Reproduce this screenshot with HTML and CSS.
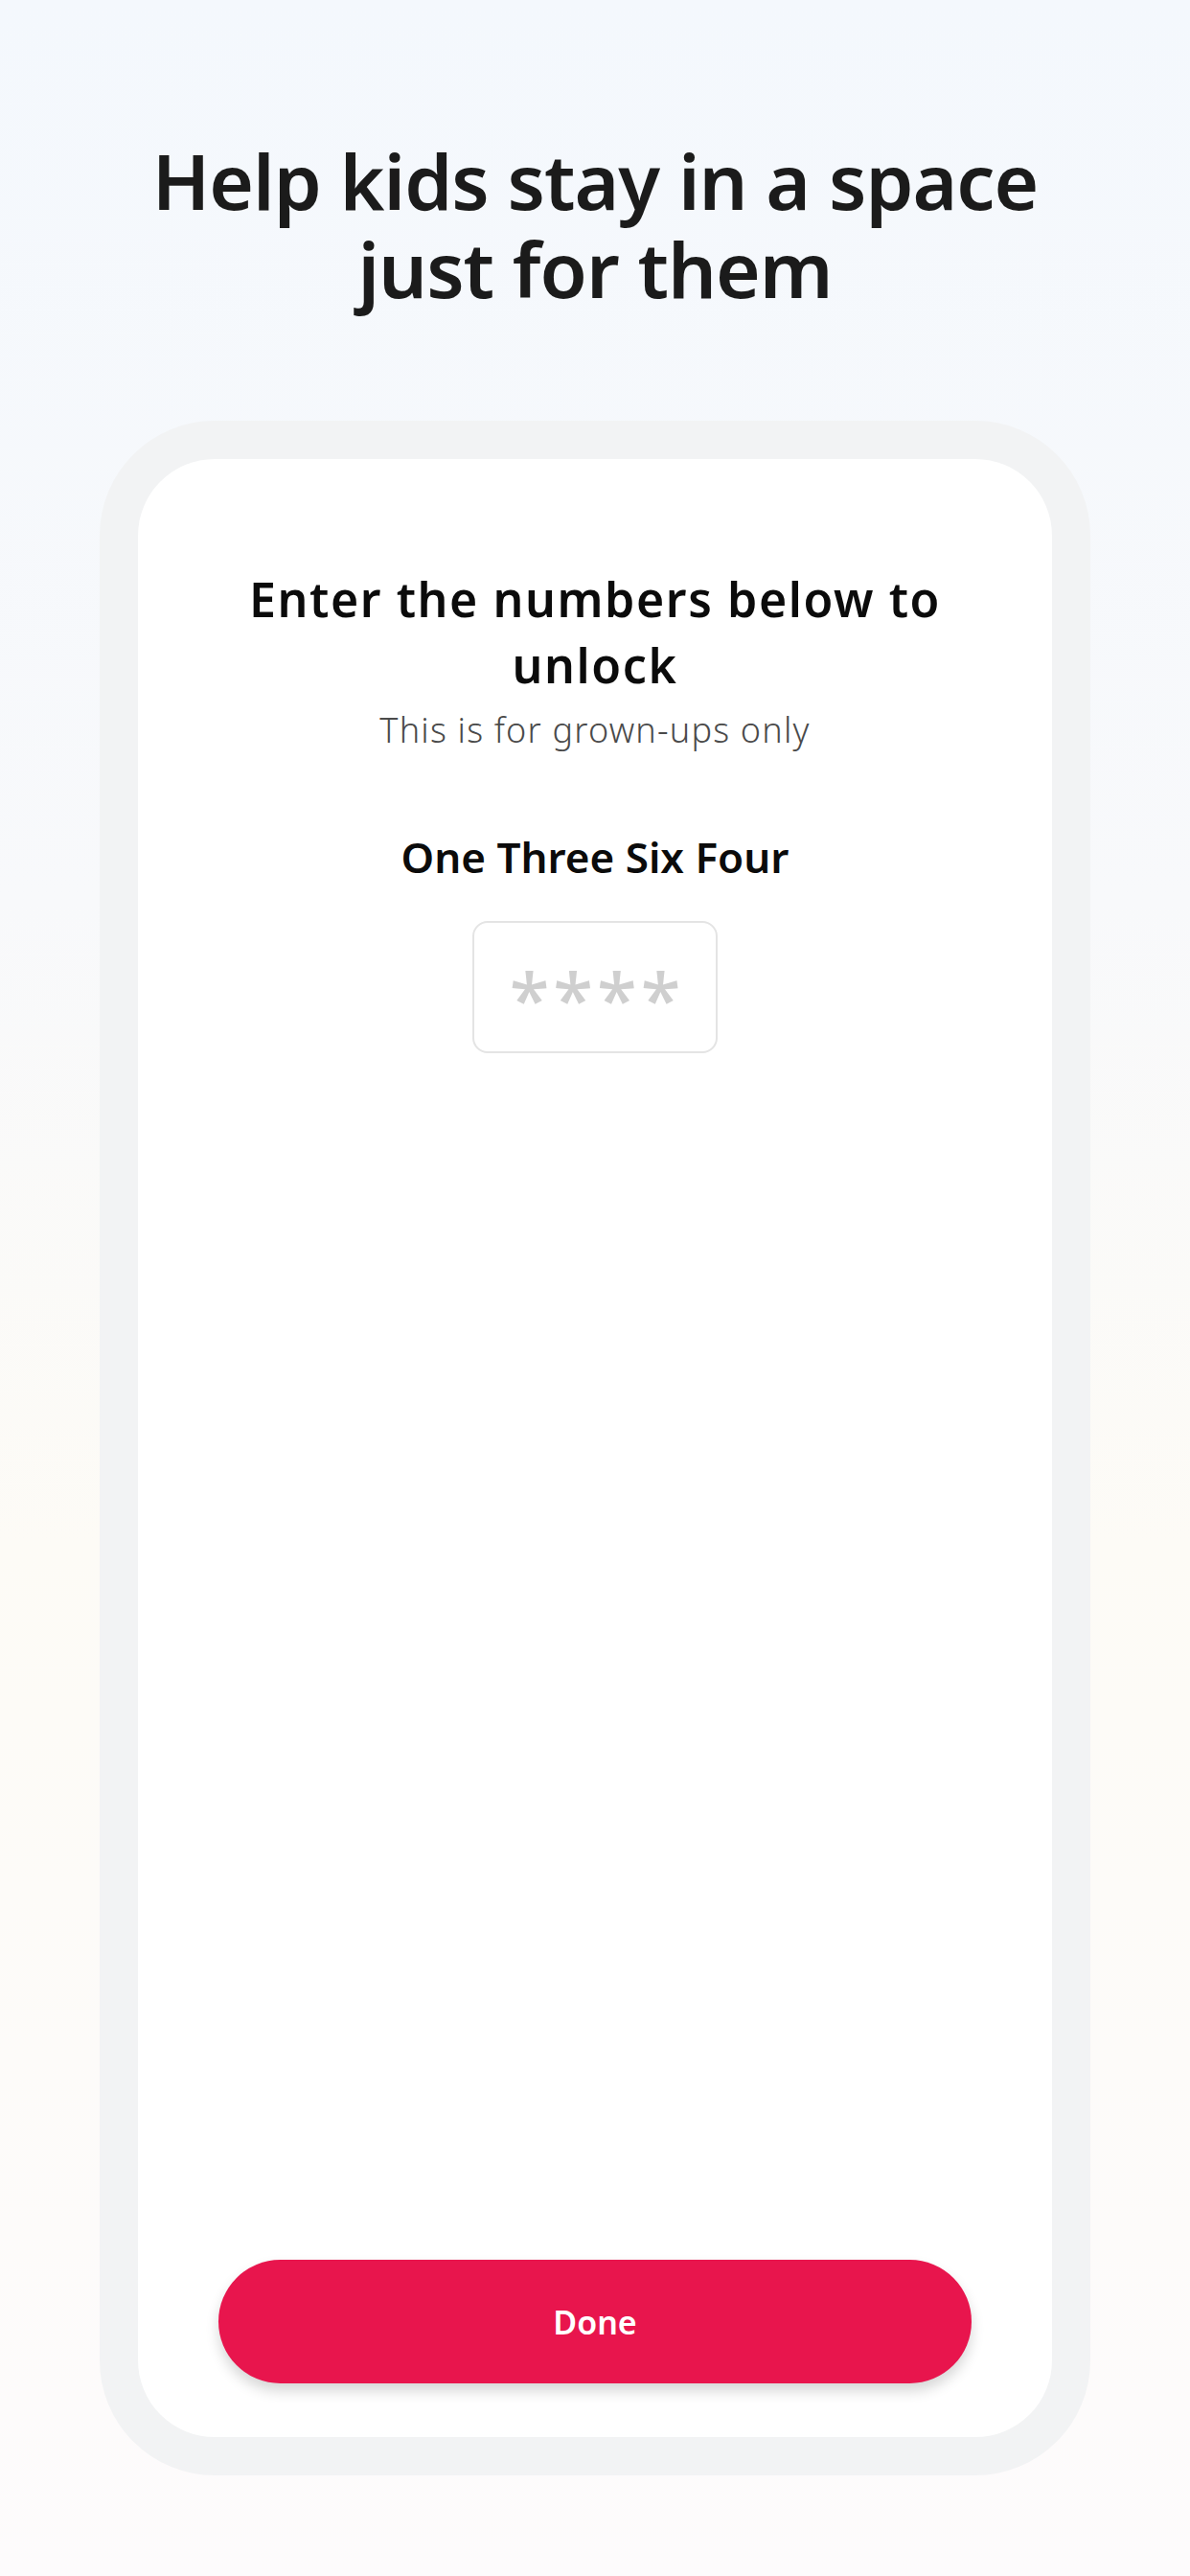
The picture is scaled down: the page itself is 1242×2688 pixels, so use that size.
FILE: index.html
```html
<!DOCTYPE html>
<html lang="en">
<head>
  <meta charset="UTF-8">
  <meta name="viewport" content="width=device-width, initial-scale=1.0">
  <title>Grown-ups lock</title>
  <link rel="stylesheet" href="styles.css">
</head>
<body>
  <div class="page">
    <h1 class="headline">Help kids stay in a space just for them</h1>

    <div class="phone">
      <div class="screen">
        <h2 class="lock-title">Enter the numbers below to unlock</h2>
        <p class="lock-sub">This is for grown-ups only</p>

        <p class="code-words">One Three Six Four</p>
        <input class="code-input" type="text" inputmode="numeric" maxlength="4" placeholder="****">

        <button class="done" type="button">Done</button>
      </div>
    </div>
  </div>
</body>
</html>
```

FILE: styles.css
```css
* {
    box-sizing: border-box;
}

body {
    margin: 0;
    font-family: "Noto Sans", "Open Sans", sans-serif;
    background: linear-gradient(180deg, #f4f8fd 0%, #f8f9fb 35%, #fdfbf6 60%, #fdfbfc 100%);
    min-height: 2688px;
}

.page {
    display: flex;
    flex-direction: column;
    align-items: center;
    padding-top: 142px;
}

.headline {
    margin: 0;
    width: 960px;
    font-size: 80px;
    line-height: 92px;
    font-weight: 600;
    text-align: center;
    color: #1b1b1b;
    letter-spacing: -1px;
}

.phone {
    margin-top: 113px;
    width: 1034px;
    height: 2144px;
    padding: 40px;
    background: #f2f3f4;
    border-radius: 120px;
}

.screen {
    height: 100%;
    background: #ffffff;
    border-radius: 80px;
    display: flex;
    flex-direction: column;
    align-items: center;
    padding: 112px 84px 56px;
}

.lock-title {
    margin: 0;
    width: 770px;
    font-size: 50px;
    line-height: 69px;
    font-weight: 600;
    letter-spacing: 1.6px;
    text-align: center;
    color: #0b0b0b;
}

.lock-sub {
    margin: 11px 0 0;
    font-size: 36px;
    line-height: 44px;
    font-weight: 300;
    letter-spacing: 1.2px;
    color: #4a4a4a;
}

.code-words {
    margin: 82px 0 0;
    font-size: 44px;
    line-height: 56px;
    font-weight: 600;
    color: #0b0b0b;
}

.code-input {
    margin-top: 39px;
    width: 256px;
    height: 138px;
    border: 2px solid #e4e4e4;
    border-radius: 16px;
    background: #fff;
    font-family: inherit;
    font-size: 76px;
    font-weight: 500;
    letter-spacing: 4px;
    text-align: center;
    padding: 22px 0 0 4px;
    color: #333;
    outline: none;
}

.code-input::placeholder {
    color: #cfcfcf;
}

.done {
    margin-top: auto;
    width: 100%;
    height: 129px;
    border: none;
    border-radius: 65px;
    background: #e8154d;
    color: #fff;
    font-family: inherit;
    font-size: 34px;
    font-weight: 600;
    box-shadow: 0 8px 14px rgba(0, 0, 0, 0.16);
    cursor: pointer;
}
```
